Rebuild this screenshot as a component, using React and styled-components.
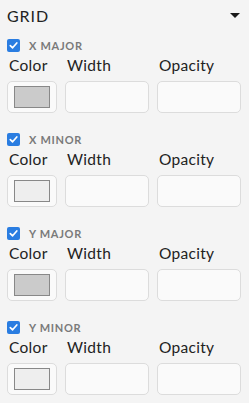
import React from "react";
import styled, { createGlobalStyle } from "styled-components";

const Global = createGlobalStyle`
  body {
    margin: 0;
    background: #f4f4f4;
    font-family: "Lato", "Noto Sans", sans-serif;
    color: #222;
  }
`;

const Panel = styled.div`
  width: 249px;
  padding: 0 8px 0 7px;
  box-sizing: border-box;
`;

const Header = styled.div`
  height: 30px;
  display: flex;
  align-items: center;
  justify-content: space-between;
  font-size: 16px;
  letter-spacing: 0.9px;
`;

const Caret = styled.span`
  width: 0;
  height: 0;
  margin-right: 1px;
  border-left: 5px solid transparent;
  border-right: 5px solid transparent;
  border-top: 5px solid #1a1a1a;
`;

const Section = styled.div`
  margin-top: 6px;
  margin-bottom: 17px;
`;

const CheckRow = styled.div`
  height: 18px;
  display: flex;
  align-items: center;
  gap: 9px;
`;

const Box = styled.span`
  width: 13px;
  height: 13px;
  border-radius: 2px;
  background: #2a7de1;
  display: flex;
  align-items: center;
  justify-content: center;
`;

const CheckLabel = styled.span`
  font-size: 11px;
  font-weight: 700;
  letter-spacing: 0.7px;
  color: #7a7a7a;
`;

const Grid = styled.div`
  display: grid;
  grid-template-columns: 50px 84px 84px;
  column-gap: 8px;
`;

const Labels = styled(Grid)`
  margin-top: 2px;
  height: 18px;
  align-items: center;
`;

const FieldLabel = styled.span`
  font-size: 15.5px;
  letter-spacing: 0.3px;
  padding-left: 2px;
`;

const Inputs = styled(Grid)`
  margin-top: 7px;
`;

const Field = styled.div`
  height: 32px;
  box-sizing: border-box;
  border: 1px solid #dcdcdc;
  border-radius: 5px;
  background: #fafafa;
  display: flex;
  align-items: center;
  justify-content: center;
`;

const Swatch = styled.span`
  width: 36px;
  height: 22px;
  box-sizing: border-box;
  border: 1px solid #888;
  background: ${(p) => p.fill};
`;

const rows = [
  { name: "X MAJOR", fill: "#cbcbcb" },
  { name: "X MINOR", fill: "#eeeeee" },
  { name: "Y MAJOR", fill: "#cbcbcb" },
  { name: "Y MINOR", fill: "#eeeeee" },
];

const Check = () => (
  <Box>
    <svg width="9" height="9" viewBox="0 0 9 9">
      <path d="M1.3 4.6 L3.6 6.8 L7.8 2" stroke="#fff" strokeWidth="1.7" fill="none" strokeLinecap="round" strokeLinejoin="round" />
    </svg>
  </Box>
);

export default function App() {
  return (
    <Panel>
      <Global />
      <Header>
        <span>GRID</span>
        <Caret />
      </Header>
      {rows.map((r) => (
        <Section key={r.name}>
          <CheckRow>
            <Check />
            <CheckLabel>{r.name}</CheckLabel>
          </CheckRow>
          <Labels>
            <FieldLabel>Color</FieldLabel>
            <FieldLabel>Width</FieldLabel>
            <FieldLabel>Opacity</FieldLabel>
          </Labels>
          <Inputs>
            <Field>
              <Swatch fill={r.fill} />
            </Field>
            <Field />
            <Field />
          </Inputs>
        </Section>
      ))}
    </Panel>
  );
}
